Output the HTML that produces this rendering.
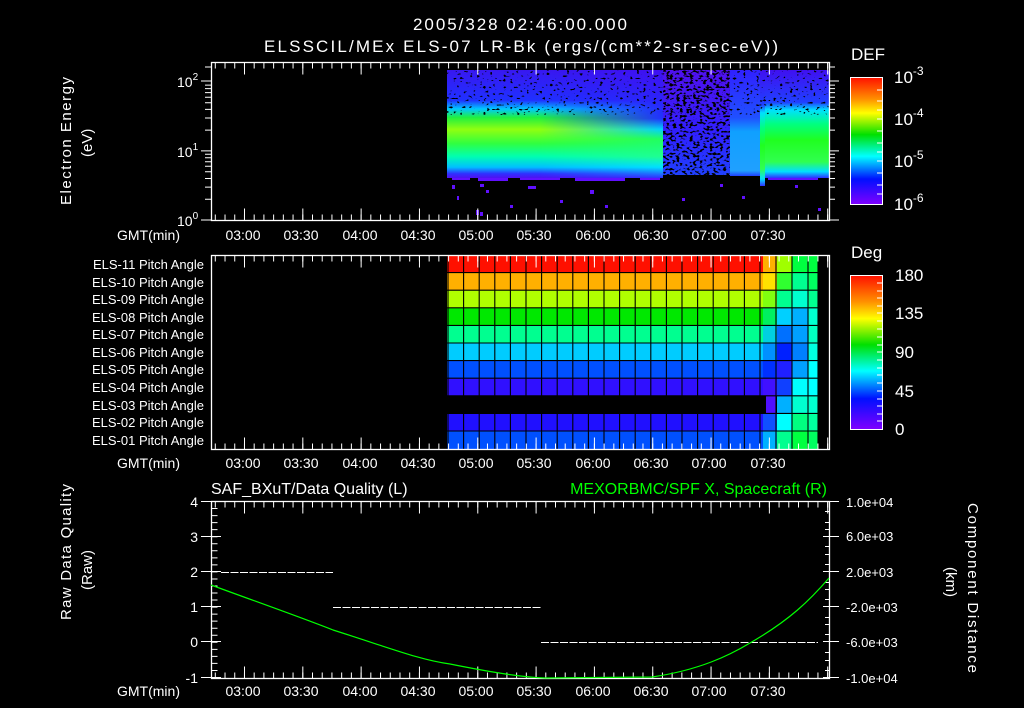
<!DOCTYPE html>
<html><head><meta charset="utf-8"><style>
html,body{margin:0;padding:0;background:#000;width:1024px;height:708px;overflow:hidden}
svg{display:block}
text{font-family:"Liberation Sans",sans-serif;fill:#fff}
</style></head><body>
<svg width="1024" height="708" viewBox="0 0 1024 708" xmlns="http://www.w3.org/2000/svg">
<defs>
<linearGradient id="rb" x1="0" y1="0" x2="0" y2="1">
<stop offset="0" stop-color="#ff1000"/><stop offset="0.17" stop-color="#ff9000"/><stop offset="0.28" stop-color="#ffff00"/><stop offset="0.45" stop-color="#00e000"/><stop offset="0.62" stop-color="#00ffff"/><stop offset="0.8" stop-color="#0010ff"/><stop offset="1" stop-color="#8000ff"/>
</linearGradient>
<linearGradient id="sA" x1="0" y1="0" x2="0" y2="1">
<stop offset="0" stop-color="#3818f0"/><stop offset="0.28" stop-color="#2030ff"/><stop offset="0.36" stop-color="#00c8ff"/><stop offset="0.44" stop-color="#20f040"/><stop offset="0.55" stop-color="#90ff10"/><stop offset="0.68" stop-color="#30ff40"/><stop offset="0.8" stop-color="#00ffb0"/><stop offset="0.9" stop-color="#00c0ff"/><stop offset="0.96" stop-color="#3030ff"/><stop offset="1" stop-color="#5010f0"/>
</linearGradient>
<linearGradient id="sA2" x1="0" y1="0" x2="0" y2="1">
<stop offset="0" stop-color="#4010f0"/><stop offset="0.45" stop-color="#2030ff"/><stop offset="0.55" stop-color="#00d0ff"/><stop offset="0.64" stop-color="#20ff60"/><stop offset="0.8" stop-color="#20ff90"/><stop offset="0.9" stop-color="#00e0ff"/><stop offset="1" stop-color="#3030ff"/>
</linearGradient>
<linearGradient id="fadeH" x1="0" y1="0" x2="1" y2="0">
<stop offset="0" stop-color="#fff" stop-opacity="0"/><stop offset="1" stop-color="#fff" stop-opacity="1"/>
</linearGradient>
<mask id="mA2" maskUnits="userSpaceOnUse" x="540" y="60" width="130" height="130"><rect x="540" y="60" width="123" height="130" fill="url(#fadeH)"/></mask>
<linearGradient id="sB" x1="0" y1="0" x2="0" y2="1">
<stop offset="0" stop-color="#5010f0"/><stop offset="0.6" stop-color="#3020ff"/><stop offset="1" stop-color="#2040ff"/>
</linearGradient>
<linearGradient id="sC" x1="0" y1="0" x2="0" y2="1">
<stop offset="0" stop-color="#3020ff"/><stop offset="0.45" stop-color="#2050ff"/><stop offset="0.58" stop-color="#10a0ff"/><stop offset="0.95" stop-color="#20a0ff"/><stop offset="1" stop-color="#2040ff"/>
</linearGradient>
<linearGradient id="sD" x1="0" y1="0" x2="0" y2="1">
<stop offset="0" stop-color="#4010f0"/><stop offset="0.3" stop-color="#2040ff"/><stop offset="0.37" stop-color="#00e0ff"/><stop offset="0.5" stop-color="#00ff80"/><stop offset="0.65" stop-color="#20ff20"/><stop offset="0.85" stop-color="#30ff50"/><stop offset="0.94" stop-color="#00e0ff"/><stop offset="1" stop-color="#3030ff"/>
</linearGradient>
<filter id="spk" x="0" y="0" width="1" height="1">
<feTurbulence type="fractalNoise" baseFrequency="0.3 0.45" numOctaves="1" seed="4"/>
<feColorMatrix type="matrix" values="0 0 0 0 0  0 0 0 0 0  0 0 0 0 0  0 0 0 -14 5.2"/>
</filter>
<filter id="spk2" x="0" y="0" width="1" height="1">
<feTurbulence type="fractalNoise" baseFrequency="0.3 0.45" numOctaves="1" seed="9"/>
<feColorMatrix type="matrix" values="0 0 0 0 0  0 0 0 0 0  0 0 0 0 0  0 0 0 -12 5.6"/>
</filter>
</defs>

<text x="413" y="30" font-size="17" textLength="214">2005/328 02:46:00.000</text>
<text x="264" y="52" font-size="17" textLength="514">ELSSCIL/MEx ELS-07 LR-Bk  (ergs/(cm**2-sr-sec-eV))</text>

<!-- ===== TOP PANEL ===== -->
<g>
<rect x="447" y="70" width="216" height="108" fill="url(#sA)"/>
<rect x="540" y="70" width="123" height="108" fill="url(#sA2)" mask="url(#mA2)"/>
<rect x="663" y="70" width="67" height="105" fill="url(#sB)"/>
<rect x="730" y="70" width="30" height="106" fill="url(#sC)"/>
<rect x="760" y="70" width="5" height="116" fill="url(#sD)"/>
<rect x="765" y="70" width="64" height="108" fill="url(#sD)"/>
<rect x="447" y="70" width="382" height="45" filter="url(#spk)"/>
<rect x="663" y="70" width="67" height="105" filter="url(#spk2)"/>
<g fill="#6010ff">
<rect x="452" y="178" width="18" height="2"/><rect x="478" y="178" width="30" height="3"/><rect x="520" y="178" width="40" height="2"/><rect x="575" y="178" width="50" height="3"/><rect x="640" y="178" width="20" height="2"/>
<rect x="768" y="178" width="50" height="2"/>
<rect x="452" y="185" width="3" height="4"/><rect x="457" y="196" width="2" height="4"/>
<rect x="480" y="184" width="4" height="3"/><rect x="486" y="190" width="3" height="3"/>
<rect x="528" y="186" width="8" height="3"/><rect x="590" y="190" width="4" height="4"/>
<rect x="605" y="205" width="3" height="3"/><rect x="682" y="198" width="3" height="3"/>
<rect x="720" y="184" width="3" height="3"/><rect x="742" y="196" width="3" height="3"/>
<rect x="795" y="185" width="3" height="3"/><rect x="818" y="208" width="3" height="3"/>
<rect x="476" y="210" width="3" height="5"/><rect x="480" y="212" width="3" height="4"/>
<rect x="510" y="205" width="3" height="3"/><rect x="560" y="200" width="3" height="3"/>
</g>
<rect x="211.5" y="62.5" width="618" height="158" fill="none" stroke="#fff" stroke-width="1.3"/>
<g stroke="#fff" fill="none">
<path d="M214.8 65.5H829" stroke-width="6" stroke-dasharray="1 8.72"/>
<path d="M244 68.5H829" stroke-width="12" stroke-dasharray="1 57.32"/>
<path d="M214.8 217.5H829" stroke-width="6" stroke-dasharray="1 8.72"/>
<path d="M244 214.5H829" stroke-width="12" stroke-dasharray="1 57.32"/>
</g>
<g stroke="#fff" stroke-width="1">
<path d="M201 220H211M201 150.9H211M201 81H211M205 199.2H211M205 187.1H211M205 178.5H211M205 171.8H211M205 166.3H211M205 161.7H211M205 157.7H211M205 154.2H211M205 130.1H211M205 118H211M205 109.4H211M205 102.7H211M205 97.2H211M205 92.6H211M205 88.6H211M205 85.1H211M205 67H211"/>
<path d="M829 220H839M829 150.9H839M829 81H839M829 199.2H835M829 187.1H835M829 178.5H835M829 171.8H835M829 166.3H835M829 161.7H835M829 157.7H835M829 154.2H835M829 130.1H835M829 118H835M829 109.4H835M829 102.7H835M829 97.2H835M829 92.6H835M829 88.6H835M829 85.1H835M829 67H835"/>
</g>
<g font-size="14"><text x="177" y="226">10<tspan font-size="10" dy="-7">0</tspan></text>
<text x="177" y="157">10<tspan font-size="10" dy="-7">1</tspan></text>
<text x="177" y="87">10<tspan font-size="10" dy="-7">2</tspan></text></g>
<g transform="translate(71,205) rotate(-90)"><text x="0" y="0" font-size="15" textLength="128">Electron Energy</text></g>
<g transform="translate(92,157) rotate(-90)"><text x="0" y="0" font-size="15">(eV)</text></g>
<text x="117" y="240" font-size="14">GMT(min)</text>
<g font-size="14" text-anchor="middle"><text x="243" y="240">03:00</text><text x="301" y="240">03:30</text><text x="360" y="240">04:00</text><text x="418" y="240">04:30</text><text x="476" y="240">05:00</text><text x="534" y="240">05:30</text><text x="593" y="240">06:00</text><text x="651" y="240">06:30</text><text x="709" y="240">07:00</text><text x="768" y="240">07:30</text></g>
<text x="851" y="60" font-size="17">DEF</text>
<rect x="850.5" y="77.5" width="32" height="127" fill="url(#rb)" stroke="#fff" stroke-width="1"/>
<g stroke="#fff"><path d="M877 90H882M877 101H882M877 110H882M877 119H882M877 131H882M877 143H882M877 152H882M877 161H882M877 173H882M877 185H882M877 194H882"/></g>
<g font-size="17"><text x="894" y="83">10<tspan font-size="12" dy="-8">-3</tspan></text><text x="894" y="125">10<tspan font-size="12" dy="-8">-4</tspan></text><text x="894" y="167">10<tspan font-size="12" dy="-8">-5</tspan></text><text x="894" y="210">10<tspan font-size="12" dy="-8">-6</tspan></text></g>
</g>

<!-- ===== MIDDLE PANEL ===== -->
<g>
<g>
<rect x="447" y="255" width="316" height="17.6" fill="#ff1000"/>
<rect x="447" y="272.6" width="316" height="17.6" fill="#ffb000"/>
<rect x="447" y="290.2" width="316" height="17.6" fill="#b0ff00"/>
<rect x="447" y="307.8" width="316" height="17.6" fill="#00e800"/>
<rect x="447" y="325.4" width="316" height="17.6" fill="#00ff90"/>
<rect x="447" y="343" width="316" height="17.6" fill="#00ccff"/>
<rect x="447" y="360.6" width="316" height="17.6" fill="#0050ff"/>
<rect x="447" y="378.2" width="316" height="17.6" fill="#3010ff"/>
<rect x="766" y="395.8" width="10" height="17.6" fill="#5010ff"/>
<rect x="447" y="413.4" width="316" height="17.6" fill="#2010ff"/>
<rect x="447" y="431" width="316" height="18" fill="#0050ff"/>
</g>
<g>
<rect x="763" y="255" width="14" height="17.6" fill="#ffb000"/><rect x="777" y="255" width="15" height="17.6" fill="#a0ff00"/><rect x="792" y="255" width="26" height="17.6" fill="#00ff40"/>
<rect x="763" y="272.6" width="14" height="17.6" fill="#ffe000"/><rect x="777" y="272.6" width="15" height="17.6" fill="#30ff30"/><rect x="792" y="272.6" width="16" height="17.6" fill="#00ff90"/><rect x="808" y="272.6" width="10" height="17.6" fill="#00ff60"/>
<rect x="763" y="290.2" width="14" height="17.6" fill="#80ff10"/><rect x="777" y="290.2" width="15" height="17.6" fill="#00ff90"/><rect x="792" y="290.2" width="16" height="17.6" fill="#00ffd0"/><rect x="808" y="290.2" width="10" height="17.6" fill="#00ff90"/>
<rect x="763" y="307.8" width="14" height="17.6" fill="#00f060"/><rect x="777" y="307.8" width="15" height="17.6" fill="#00d0ff"/><rect x="792" y="307.8" width="16" height="17.6" fill="#00b0ff"/><rect x="808" y="307.8" width="10" height="17.6" fill="#00ffd0"/>
<rect x="763" y="325.4" width="14" height="17.6" fill="#00d0e0"/><rect x="777" y="325.4" width="15" height="17.6" fill="#0070ff"/><rect x="792" y="325.4" width="16" height="17.6" fill="#00a0ff"/><rect x="808" y="325.4" width="10" height="17.6" fill="#00ffc0"/>
<rect x="763" y="343" width="14" height="17.6" fill="#0090ff"/><rect x="777" y="343" width="15" height="17.6" fill="#0020ff"/><rect x="792" y="343" width="16" height="17.6" fill="#0080ff"/><rect x="808" y="343" width="10" height="17.6" fill="#00ffe0"/>
<rect x="763" y="360.6" width="14" height="17.6" fill="#0030ff"/><rect x="777" y="360.6" width="15" height="17.6" fill="#2020ff"/><rect x="792" y="360.6" width="16" height="17.6" fill="#00a0ff"/><rect x="808" y="360.6" width="10" height="17.6" fill="#00ffff"/>
<rect x="763" y="378.2" width="14" height="17.6" fill="#4010ff"/><rect x="777" y="378.2" width="15" height="17.6" fill="#1040ff"/><rect x="792" y="378.2" width="16" height="17.6" fill="#00ffff"/><rect x="808" y="378.2" width="10" height="17.6" fill="#00ffff"/>
<rect x="777" y="395.8" width="15" height="17.6" fill="#00b0ff"/><rect x="792" y="395.8" width="16" height="17.6" fill="#00ffd0"/><rect x="808" y="395.8" width="10" height="17.6" fill="#00ffd0"/>
<rect x="763" y="413.4" width="14" height="17.6" fill="#1050ff"/><rect x="777" y="413.4" width="15" height="17.6" fill="#00ffff"/><rect x="792" y="413.4" width="16" height="17.6" fill="#00ff80"/><rect x="808" y="413.4" width="10" height="17.6" fill="#00ffa0"/>
<rect x="763" y="431" width="14" height="18" fill="#00b0ff"/><rect x="777" y="431" width="15" height="18" fill="#00ff90"/><rect x="792" y="431" width="16" height="18" fill="#00ff40"/><rect x="808" y="431" width="10" height="18" fill="#00ff60"/>
</g>
<g stroke="#000" stroke-width="1.1">
<path d="M448 255V449M463.6 255V449M479.2 255V449M494.8 255V449M510.4 255V449M526 255V449M541.6 255V449M557.2 255V449M572.8 255V449M588.4 255V449M604 255V449M619.6 255V449M635.2 255V449M650.8 255V449M666.4 255V449M682 255V449M697.6 255V449M713.2 255V449M728.8 255V449M744.4 255V449M760 255V449M776 255V449M792 255V449M808 255V449M818 255V449"/>
<path d="M447 272.6H818M447 290.2H818M447 307.8H818M447 325.4H818M447 343H818M447 360.6H818M447 378.2H818M447 395.8H818M447 413.4H818M447 431H818"/>
</g>
<rect x="211.5" y="255.5" width="618" height="194" fill="none" stroke="#fff" stroke-width="1.3"/>
<g stroke="#fff" fill="none">
<path d="M214.8 258.5H829" stroke-width="6" stroke-dasharray="1 8.72"/>
<path d="M244 261.5H829" stroke-width="12" stroke-dasharray="1 57.32"/>
<path d="M214.8 446.5H829" stroke-width="6" stroke-dasharray="1 8.72"/>
<path d="M244 443.5H829" stroke-width="12" stroke-dasharray="1 57.32"/>
</g>
<g font-size="13" text-anchor="end">
<text x="204" y="269">ELS-11 Pitch Angle</text><text x="204" y="287">ELS-10 Pitch Angle</text><text x="204" y="304">ELS-09 Pitch Angle</text><text x="204" y="322">ELS-08 Pitch Angle</text><text x="204" y="339">ELS-07 Pitch Angle</text><text x="204" y="357">ELS-06 Pitch Angle</text><text x="204" y="374">ELS-05 Pitch Angle</text><text x="204" y="392">ELS-04 Pitch Angle</text><text x="204" y="410">ELS-03 Pitch Angle</text><text x="204" y="427">ELS-02 Pitch Angle</text><text x="204" y="445">ELS-01 Pitch Angle</text>
</g>
<text x="117" y="468" font-size="14">GMT(min)</text>
<g font-size="14" text-anchor="middle"><text x="243" y="468">03:00</text><text x="301" y="468">03:30</text><text x="360" y="468">04:00</text><text x="418" y="468">04:30</text><text x="476" y="468">05:00</text><text x="534" y="468">05:30</text><text x="593" y="468">06:00</text><text x="651" y="468">06:30</text><text x="709" y="468">07:00</text><text x="768" y="468">07:30</text></g>
<text x="851" y="258" font-size="17">Deg</text>
<rect x="850.5" y="275.5" width="32" height="154" fill="url(#rb)" stroke="#fff" stroke-width="1"/>
<g stroke="#fff"><path d="M877 283H882M877 291H882M877 298H882M877 306H882M877 313H882M877 321H882M877 329H882M877 337H882M877 345H882M877 352H882M877 360H882M877 368H882M877 375H882M877 383H882M877 391H882M877 399H882M877 406H882M877 414H882M877 421H882"/></g>
<g font-size="17"><text x="895" y="281">180</text><text x="895" y="319">135</text><text x="895" y="358">90</text><text x="895" y="397">45</text><text x="895" y="435">0</text></g>
</g>

<!-- ===== BOTTOM PANEL ===== -->
<g>
<text x="211" y="494" font-size="16">SAF_BXuT/Data Quality (L)</text>
<text x="827" y="494" font-size="16" text-anchor="end" style="fill:#00ff00">MEXORBMC/SPF X, Spacecraft (R)</text>
<rect x="211.5" y="501.5" width="618" height="177" fill="none" stroke="#fff" stroke-width="1.3"/>
<g stroke="#fff" fill="none">
<path d="M214.8 504.5H829" stroke-width="6" stroke-dasharray="1 8.72"/>
<path d="M244 507.5H829" stroke-width="12" stroke-dasharray="1 57.32"/>
<path d="M214.8 675.5H829" stroke-width="6" stroke-dasharray="1 8.72"/>
<path d="M244 672.5H829" stroke-width="12" stroke-dasharray="1 57.32"/>
<path d="M214.5 501V678" stroke-width="6" stroke-dasharray="1 6.04"/>
</g>
<g stroke="#fff"><path d="M201 501.5H221M201 536.5H221M201 571.5H221M201 606.5H221M201 641.5H221M201 677.5H221"/>
<path d="M823 501.5H839M823 536.5H839M823 571.5H839M823 606.5H839M823 641.5H839M823 677.5H839M825 511.5H829M825 522.5H829M825 529.5H829M825 546.5H829M825 554.5H829M825 564.5H829M825 582.5H829M825 589.5H829M825 599.5H829M825 617.5H829M825 624.5H829M825 634.5H829M825 652.5H829M825 660.5H829M825 670.5H829"/></g>
<g font-size="14" text-anchor="end"><text x="198" y="507">4</text><text x="198" y="542">3</text><text x="198" y="577">2</text><text x="198" y="612">1</text><text x="198" y="647">0</text><text x="198" y="683">-1</text></g>
<g font-size="13"><text x="846" y="507">1.0e+04</text><text x="846" y="541">6.0e+03</text><text x="846" y="577">2.0e+03</text><text x="846" y="612">-2.0e+03</text><text x="846" y="647">-6.0e+03</text><text x="846" y="683">-1.0e+04</text></g>
<g stroke="#fff" stroke-width="1" stroke-dasharray="8 1.5"><path d="M221 572.5H333M333 607.5H541M541 642.5H818"/></g>
<path d="M211 585 C260 603 300 617 333 630 C390 648 420 660 450 664 C490 672 520 677 545 678 L652 677 C700 670 730 655 750 643 C790 620 810 600 829 578" fill="none" stroke="#00ff00" stroke-width="1.2"/>
<g transform="translate(71,620) rotate(-90)"><text x="0" y="0" font-size="15" textLength="136">Raw Data Quality</text></g>
<g transform="translate(92,590) rotate(-90)"><text x="0" y="0" font-size="15">(Raw)</text></g>
<g transform="translate(968,503) rotate(90)"><text x="0" y="0" font-size="15" textLength="170">Component Distance</text></g>
<g transform="translate(946,567) rotate(90)"><text x="0" y="0" font-size="15">(km)</text></g>
<text x="117" y="696" font-size="14">GMT(min)</text>
<g font-size="14" text-anchor="middle"><text x="243" y="696">03:00</text><text x="301" y="696">03:30</text><text x="360" y="696">04:00</text><text x="418" y="696">04:30</text><text x="476" y="696">05:00</text><text x="534" y="696">05:30</text><text x="593" y="696">06:00</text><text x="651" y="696">06:30</text><text x="709" y="696">07:00</text><text x="768" y="696">07:30</text></g>
</g>
</svg>
</body></html>
